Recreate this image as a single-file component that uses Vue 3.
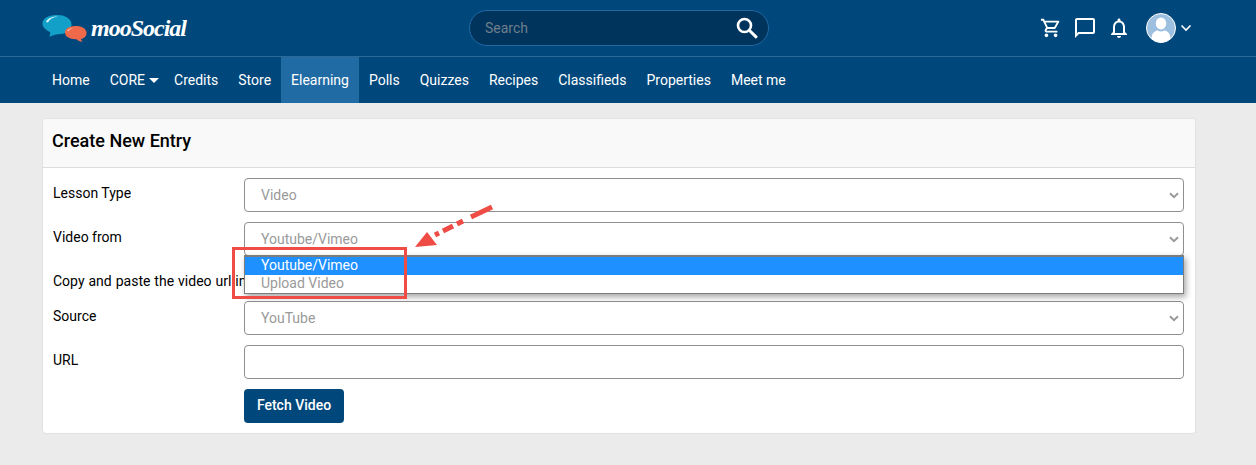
<script setup>
const navItems = ['Home', 'CORE', 'Credits', 'Store', 'Elearning', 'Polls', 'Quizzes', 'Recipes', 'Classifieds', 'Properties', 'Meet me']
</script>

<template>
  <div class="page">
    <header class="top">
      <div class="logo">
        <svg width="46" height="30" viewBox="0 0 46 30">
          <path d="M14 2c8-.5 15 3 15.500 9 .3 5-4 9.500-11 10-3 .2-5.500.5-8.500 1.800-1.500.7-3 1.200-2.500 0 .6-1.300 1-2.500.5-3.800C3.500 17 .5 14 .5 10.500.5 5.500 6 2.500 14 2z" fill="#12a0c8"/>
          <path d="M4 9c1-3.500 6-5.500 12-5.500-5 .8-8.500 2.500-10 6z" fill="#d5f1f8"/>
          <path d="M33 16c6-.3 11 2 11.500 6.500.3 3.500-2.500 6-5.500 6.500.2 1 .7 2 1.500 3-2.500-.5-4.500-1.500-6-2.800-6 .2-11-2-11.500-6.200C22.500 19 27 16.300 33 16z" fill="#f0694a" transform="translate(0 -3)"/>
          <path d="M25 18c1-2 4-3 7-3-3 .5-4.500 1.500-5.500 3.300z" fill="#fbc4b3"/>
        </svg>
        <span class="logo-text">mooSocial</span>
      </div>
      <div class="search">
        <span class="search-ph">Search</span>
        <svg width="22" height="22" viewBox="0 0 22 22" fill="none" stroke="#fff">
          <circle cx="8.500" cy="8.500" r="6.500" stroke-width="2.600"/>
          <path d="M13.500 13.500l6.500 6.300" stroke-width="3" stroke-linecap="round"/>
        </svg>
      </div>
      <div class="actions">
        <svg class="cart" width="22" height="22" viewBox="0 0 24 24" fill="#fff">
          <path d="M15.550 13c.750 0 1.410-.410 1.750-1.030l3.580-6.490A1 1 0 0 0 20.010 4H5.210l-.940-2H1v2h2l3.600 7.590-1.350 2.440C4.520 15.370 5.480 17 7 17h12v-2H7l1.100-2h7.450zM6.160 6h12.150l-2.760 5H8.530L6.160 6zM7 18c-1.100 0-1.990.900-1.990 2S5.900 22 7 22s2-.900 2-2-.900-2-2-2zm10 0c-1.100 0-1.990.900-1.990 2s.890 2 1.990 2 2-.900 2-2-.900-2-2-2z"/>
        </svg>
        <svg class="chat" width="24" height="24" viewBox="0 0 24 24" fill="#fff">
          <path d="M20 2H4c-1.100 0-2 .900-2 2v18l4-4h14c1.100 0 2-.900 2-2V4c0-1.100-.900-2-2-2zm0 14H5.170L4 17.170V4h16v12z"/>
        </svg>
        <svg class="bell" width="24" height="24" viewBox="0 0 24 24" fill="#fff">
          <path d="M12 22c1.100 0 2-.900 2-2h-4c0 1.100.900 2 2 2zm6-6v-5c0-3.070-1.630-5.640-4.500-6.320V4c0-.830-.670-1.500-1.500-1.500s-1.500.670-1.500 1.500v.680C7.640 5.360 6 7.920 6 11v5l-2 2v1h16v-1l-2-2zm-2 1H8v-6c0-2.480 1.510-4.500 4-4.500s4 2.020 4 4.500v6z"/>
        </svg>
        <div class="user">
          <svg width="30" height="30" viewBox="0 0 30 30">
            <circle cx="15" cy="15" r="14.500" fill="#9dbfe0" stroke="#fff" stroke-width="1"/>
            <ellipse cx="15" cy="10.500" rx="5.200" ry="6" fill="#fff"/>
            <path d="M5.500 25.500c0-5 3-7.500 6-8 2 1.200 5 1.200 7 0 3 .5 6 3 6 8-2.500 2.500-6 4-9.500 4s-7-1.500-9.500-4z" fill="#fff"/>
          </svg>
          <svg width="12" height="8" viewBox="0 0 12 8" fill="none" stroke="#fff" stroke-width="1.600">
            <path d="M1.500 1.500L6 6l4.500-4.500"/>
          </svg>
        </div>
      </div>
    </header>

    <nav class="nav">
      <a v-for="item in navItems" :key="item" class="nav-item" :class="{ active: item === 'Elearning', core: item === 'CORE' }">
        {{ item }}<span v-if="item === 'CORE'" class="caret"></span>
      </a>
    </nav>

    <main class="main">
      <section class="card">
        <h1 class="card-title">Create New Entry</h1>
        <div class="form">
          <div class="row">
            <label class="label">Lesson Type</label>
            <div class="select">
              <span>Video</span>
              <svg class="chev" width="10" height="7" viewBox="0 0 10 7" fill="none"><path d="M1 1.200L5 5.200l4-4" /></svg>
            </div>
          </div>
          <div class="row">
            <label class="label">Video from</label>
            <div class="select">
              <span>Youtube/Vimeo</span>
              <svg class="chev" width="10" height="7" viewBox="0 0 10 7" fill="none"><path d="M1 1.200L5 5.200l4-4" /></svg>
            </div>
          </div>
          <div class="row text-row">
            <label class="label wide">Copy and paste the video url in</label>
          </div>
          <div class="row">
            <label class="label">Source</label>
            <div class="select">
              <span>YouTube</span>
              <svg class="chev" width="10" height="7" viewBox="0 0 10 7" fill="none"><path d="M1 1.200L5 5.200l4-4" /></svg>
            </div>
          </div>
          <div class="row">
            <label class="label">URL</label>
            <div class="select"></div>
          </div>
          <div class="row button-row">
            <span class="label"></span>
            <button class="btn">Fetch Video</button>
          </div>
        </div>
      </section>

      <ul class="dropdown">
        <li class="opt selected">Youtube/Vimeo</li>
        <li class="opt">Upload Video</li>
      </ul>
      <div class="callout"></div>
      <svg class="arrow" width="84" height="50" viewBox="0 0 84 50">
        <path d="M79 4L58 14M50 18L44 21M40 23L30 28M26 30L22 32" stroke="#ef4c46" stroke-width="5" fill="none"/>
        <path d="M2 44L14 29L19 35.500L24 42z" fill="#ef4c46"/>
      </svg>
    </main>
  </div>
</template>

<style scoped>
.page {
  width: 1256px;
  height: 465px;
  overflow: hidden;
  background: #ebebeb;
  font-family: Roboto, "Liberation Sans", sans-serif;
  font-size: 14px;
  color: #000;
}
.top {
  height: 56px;
  background: #00487c;
  border-bottom: 1px solid #2d6a97;
  display: flex;
  align-items: center;
  padding-left: 42px;
  padding-right: 64px;
}
.logo {
  width: 427px;
  display: flex;
  align-items: center;
  gap: 3px;
  flex-shrink: 0;
}
.logo-text {
  font-family: "Liberation Serif", serif;
  font-style: italic;
  font-weight: 700;
  font-size: 24px;
  letter-spacing: -1px;
  color: #fff;
}
.search {
  width: 300px;
  height: 36px;
  box-sizing: border-box;
  background: #00345c;
  border: 1px solid #2268a3;
  border-radius: 18px;
  display: flex;
  align-items: center;
  justify-content: space-between;
  padding: 0 10px 0 15px;
  flex-shrink: 0;
}
.search-ph {
  color: #6f7f8c;
  font-size: 14px;
}
.actions {
  margin-left: auto;
  display: flex;
  align-items: center;
}
.cart { margin-right: 11px; }
.chat { margin-right: 10px; }
.bell { margin-right: 15px; }
.user {
  display: flex;
  align-items: center;
  gap: 4px;
}
.nav {
  height: 46px;
  background: #00487c;
  display: flex;
  padding-left: 42px;
}
.nav-item {
  color: #fff;
  padding: 0 10px;
  line-height: 46px;
  display: block;
}
.nav-item.active {
  background: #216ba5;
}
.nav-item.core {
  padding-right: 5px;
}
.caret {
  display: inline-block;
  width: 0;
  height: 0;
  margin-left: 4px;
  vertical-align: 2px;
  border-left: 5px solid transparent;
  border-right: 5px solid transparent;
  border-top: 5px solid #fff;
}
.main {
  position: relative;
  padding: 15px 60px 0 42px;
}
.card {
  background: #fff;
  border: 1px solid #e1e1e1;
  border-radius: 4px;
  height: 316px;
  box-sizing: border-box;
  overflow: hidden;
}
.card-title {
  margin: 0;
  height: 48px;
  box-sizing: content-box;
  background: #f9f9f9;
  border-bottom: 1px solid #dcdcdc;
  padding-left: 9px;
  font-size: 18px;
  font-weight: 500;
  line-height: 44px;
}
.form {
  padding: 10px 11px 0 10px;
  display: flex;
  flex-direction: column;
  gap: 10px;
}
.row {
  display: flex;
  height: 34px;
  position: relative;
}
.text-row {
  height: 25px;
}
.label {
  width: 191px;
  flex-shrink: 0;
  line-height: 30px;
  white-space: nowrap;
}
.label.wide {
  width: auto;
  line-height: 30px;
  word-spacing: .5px;
}
.select {
  flex: 1;
  box-sizing: border-box;
  border: 1px solid #8f8f8f;
  border-radius: 4px;
  display: flex;
  align-items: center;
  justify-content: space-between;
  padding: 0 4px 0 16px;
  color: #9a9a9a;
  background: #fff;
}
.chev {
  stroke: #9a9a9a;
  stroke-width: 2;
}
.btn {
  height: 34px;
  width: 100px;
  background: #00487c;
  color: #fff;
  border: 0;
  border-radius: 4px;
  font-family: inherit;
  font-size: 14px;
  font-weight: 500;
  padding: 0 0 2px;
}
.dropdown {
  position: absolute;
  left: 244px;
  top: 152px;
  width: 940px;
  height: 39px;
  box-sizing: border-box;
  margin: 0;
  padding: 0;
  list-style: none;
  background: #fff;
  border: 1px solid #7d7d7d;
  border-top-width: 2px;
  box-shadow: 2px 3px 6px rgba(0, 0, 0, .35);
}
.opt {
  height: 18px;
  line-height: 16px;
  padding-left: 16px;
  color: #9a9a9a;
}
.opt.selected {
  background: #1e90ff;
  color: #fff;
}
.callout {
  position: absolute;
  left: 232px;
  top: 144px;
  width: 175px;
  height: 52px;
  box-sizing: border-box;
  border: 3px solid #ef4c46;
  pointer-events: none;
}
.arrow {
  position: absolute;
  left: 413px;
  top: 100px;
}
</style>

<style>
html, body { margin: 0; background: #ebebeb; }
</style>
